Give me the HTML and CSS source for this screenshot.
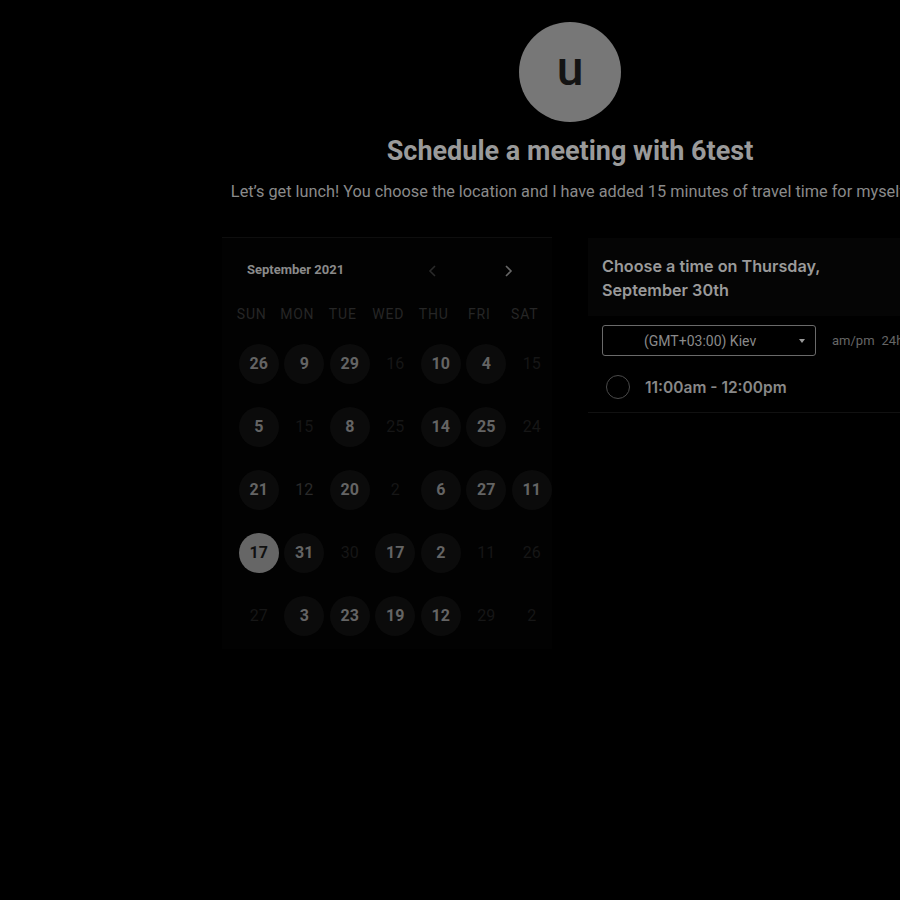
FILE: index.html
```html
<!DOCTYPE html>
<html>
<head>
<meta charset="utf-8">
<link rel="stylesheet" href="styles.css">
</head>
<body>
<div class="page">
  <div class="avatar">u</div>
  <h1 class="title">Schedule a meeting with 6test</h1>
  <p class="subtitle">Let’s get lunch! You choose the location and I have added 15 minutes of travel time for myself.</p>
  <div class="columns">
    <section class="calendar">
      <div class="cal-head">
        <span class="month">September 2021</span>
        <div class="arrows">
          <svg class="arrow prev" width="12" height="14" viewBox="0 0 12 14"><path d="M8 2 L3 7 L8 12" fill="none" stroke="currentColor" stroke-width="1.6"/></svg>
          <svg class="arrow next" width="12" height="14" viewBox="0 0 12 14"><path d="M4 2 L9 7 L4 12" fill="none" stroke="currentColor" stroke-width="1.6"/></svg>
        </div>
      </div>
      <div class="weekdays">
        <span>SUN</span><span>MON</span><span>TUE</span><span>WED</span><span>THU</span><span>FRI</span><span>SAT</span>
      </div>
      <div class="days">
        <span class="day av">26</span><span class="day av">9</span><span class="day av">29</span><span class="day dim">16</span><span class="day av">10</span><span class="day av">4</span><span class="day dim">15</span>
        <span class="day av">5</span><span class="day dim">15</span><span class="day av">8</span><span class="day dim">25</span><span class="day av">14</span><span class="day av">25</span><span class="day dim">24</span>
        <span class="day av">21</span><span class="day dim lite">12</span><span class="day av">20</span><span class="day dim">2</span><span class="day av">6</span><span class="day av">27</span><span class="day av">11</span>
        <span class="day sel">17</span><span class="day av">31</span><span class="day dim">30</span><span class="day av">17</span><span class="day av">2</span><span class="day dim">11</span><span class="day dim">26</span>
        <span class="day dim">27</span><span class="day av">3</span><span class="day av">23</span><span class="day av">19</span><span class="day av">12</span><span class="day dim">29</span><span class="day dim">2</span>
      </div>
    </section>
    <section class="times">
      <div class="times-head">Choose a time on Thursday,<br>September 30th</div>
      <div class="controls">
        <div class="tz-select">
          <span class="tz-label">(GMT+03:00) Kiev</span>
          <span class="caret"></span>
        </div>
        <div class="format"><span>am/pm</span><span>24h</span></div>
      </div>
      <div class="slot">
        <span class="radio"></span>
        <span class="slot-label">11:00am - 12:00pm</span>
      </div>
    </section>
  </div>
</div>
</body>
</html>
```

FILE: styles.css
```css
html, body {
  margin: 0;
  padding: 0;
  background: #000;
  overflow: hidden;
}
body {
  font-family: Roboto, "Liberation Sans", sans-serif;
  color: #888;
}
.page {
  width: 696px;
  margin-left: 222px;
  padding-top: 22px;
  display: flex;
  flex-direction: column;
  align-items: center;
}
.avatar {
  width: 102px;
  height: 100px;
  border-radius: 50%;
  background: #777;
  color: #141414;
  font-size: 48px;
  font-weight: 500;
  display: flex;
  align-items: center;
  justify-content: center;
  line-height: 1;
  padding-bottom: 6px;
  box-sizing: border-box;
}
.title {
  margin: 14px 0 0;
  font-size: 27px;
  font-weight: 700;
  color: #9a9a9a;
  line-height: 30px;
}
.subtitle {
  margin: 15px 0 0;
  font-size: 16.3px;
  color: #8a8a8a;
  line-height: 22px;
  white-space: nowrap;
}
.columns {
  margin-top: 34px;
  width: 696px;
  display: flex;
  gap: 36px;
  align-items: flex-start;
}
.calendar {
  width: 330px;
  box-sizing: border-box;
  padding: 18px 0 14px 14px;
  border-top: 1px solid #0e0e0e;
  background: #020202;
  height: 412px;
}
.cal-head {
  display: flex;
  align-items: center;
  height: 26px;
  padding-left: 11px;
}
.month {
  font-size: 13px;
  font-weight: 700;
  color: #8a8a8a;
  width: 180px;
}
.arrows {
  display: flex;
  gap: 63px;
  align-items: center;
  padding-top: 4px;
}
.arrow.prev { color: #2a2a2a; }
.arrow.next { color: #666; }
.weekdays {
  display: grid;
  grid-template-columns: repeat(7, 45.5px);
  margin: 22px 0 0 -7px;
  height: 20px;
  align-items: center;
}
.weekdays span {
  text-align: center;
  font-size: 14px;
  letter-spacing: 0.8px;
  color: #262626;
}
.days {
  display: grid;
  grid-template-columns: repeat(7, 45.5px);
  grid-auto-rows: 63px;
  margin-top: 8px;
  justify-items: center;
  align-items: center;
}
.day {
  width: 40px;
  height: 40px;
  border-radius: 50%;
  display: flex;
  align-items: center;
  justify-content: center;
  font-size: 16px;
}
.day.av {
  background: #0b0b0b;
  color: #646464;
  font-weight: 700;
}
.day.dim {
  color: #161616;
  font-weight: 400;
}
.day.dim.lite { color: #2a2a2a; }
.day.sel {
  background: #666;
  color: #111;
  font-weight: 700;
}
.times {
  width: 330px;
  box-sizing: border-box;
  border-bottom: 1px solid #111;
  padding-bottom: 10px;
}
.times-head {
  background: #050505;
  padding: 16px 14px 14px;
  font-family: Inter, Roboto, sans-serif;
  font-size: 16.2px;
  font-weight: 600;
  line-height: 24px;
  color: #9a9a9a;
  margin-top: 1px;
}
.controls {
  display: flex;
  align-items: center;
  margin: 9px 0 0 14px;
}
.tz-select {
  width: 214px;
  height: 31px;
  box-sizing: border-box;
  border: 1px solid #6a6a6a;
  border-radius: 3px;
  display: flex;
  align-items: center;
  padding-left: 41px;
  padding-right: 10px;
  font-size: 14px;
  color: #8a8a8a;
}
.tz-label { flex: 1; }
.caret {
  width: 0;
  height: 0;
  border-left: 3.5px solid transparent;
  border-right: 3.5px solid transparent;
  border-top: 4px solid #999;
}
.format {
  display: flex;
  gap: 7px;
  margin-left: 16px;
  font-size: 13px;
  color: #666;
}
.slot {
  display: flex;
  align-items: center;
  margin: 16px 0 0 18px;
  height: 30px;
}
.radio {
  width: 22px;
  height: 22px;
  border-radius: 50%;
  border: 1.5px solid #4a4a4a;
}
.slot-label {
  margin-left: 15px;
  font-family: Inter, Roboto, sans-serif;
  font-size: 15.5px;
  font-weight: 600;
  color: #888;
}
```
